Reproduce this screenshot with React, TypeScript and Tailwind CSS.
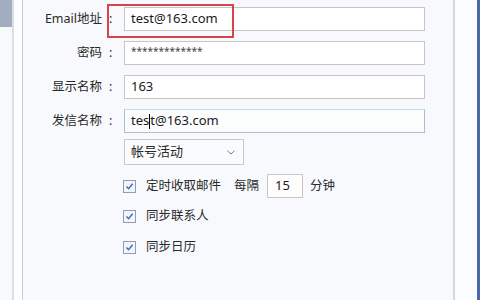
import React from "react";

const font = { fontFamily: '"Noto Sans", "Noto Sans CJK SC", sans-serif' };

function Check() {
  return (
    <span className="w-[13px] h-[13px] border border-[#8e9db3] bg-[#f1f5fb] flex items-center justify-center shrink-0">
      <svg width="9" height="9" viewBox="0 0 9 9">
        <path d="M1.5 4.6 L3.6 6.8 L7.6 1.8" fill="none" stroke="#3c6bb0" strokeWidth="1.4" />
      </svg>
    </span>
  );
}

function Row({ label, children }: { label: string; children: React.ReactNode }) {
  return (
    <div className="flex items-center h-[24px]">
      <div className="w-[79px] text-right text-[12.5px] text-[#2a2a2a] leading-none whitespace-nowrap">{label}</div>
      <div className="w-[22px] text-[12.5px] text-[#2a2a2a] leading-none pl-[7px]">:</div>
      <div className="flex-1">{children}</div>
    </div>
  );
}

export default function App() {
  return (
    <div className="w-[480px] h-[300px] bg-[#f7f9fc] flex overflow-hidden" style={font}>
      <div className="w-[12px] flex flex-col">
        <div className="h-[27px] bg-[#a2aec0]"></div>
      </div>
      <div className="w-[2px] bg-[#dadde2]"></div>
      <div className="w-[8px] bg-[#fcfdfe]"></div>
      <div className="w-[1px] bg-[#c9ccd2]"></div>
      <div className="relative w-[430px] flex flex-col pt-[7px]">
        <div className="flex flex-col gap-[10px] pr-[28px]">
          <Row label="Email地址">
            <div className="h-[24px] border border-[#c6c6c6] bg-white flex items-center px-[6px] text-[13px] text-[#1a1a1a]">test@163.com</div>
          </Row>
          <Row label="密码">
            <div className="h-[24px] border border-[#c6c6c6] bg-white flex items-center px-[6px] pb-[3px] text-[10px] text-[#444]">*************</div>
          </Row>
          <Row label="显示名称">
            <div className="h-[24px] border border-[#c6c6c6] bg-white flex items-center px-[6px] text-[13px] text-[#1a1a1a]">163</div>
          </Row>
          <Row label="发信名称">
            <div className="h-[24px] border border-[#a9bfd4] border-t-[#bfe0ee] bg-[#fbfdfd] flex items-center px-[6px] text-[13px] text-[#1a1a1a]">
              <span>tes</span>
              <span className="w-[1px] h-[15px] bg-black"></span>
              <span>t@163.com</span>
            </div>
          </Row>
        </div>
        <div className="ml-[101px] mt-[6px] w-[120px] h-[26px] border border-[#c6c6c6] bg-[#fafbfc] flex items-center justify-between pl-[6px] pr-[8px]">
          <span className="text-[13px] text-[#2a2a2a]">帐号活动</span>
          <svg width="8" height="5" viewBox="0 0 8 5">
            <path d="M0.5 0.8 L4 4 L7.5 0.8" fill="none" stroke="#777" strokeWidth="1" />
          </svg>
        </div>
        <div className="ml-[100px] mt-[9px] flex flex-col">
          <div className="flex items-center h-[24px]">
            <Check />
            <span className="ml-[10px] text-[12.5px] text-[#2a2a2a]">定时收取邮件</span>
            <span className="ml-[13px] text-[12.5px] text-[#2a2a2a]">每隔</span>
            <div className="ml-[8px] w-[36px] h-[24px] border border-[#c6c6c6] bg-[#fdfdfb] flex items-center px-[7px] text-[13px] text-[#1a1a1a]">15</div>
            <span className="ml-[7px] text-[12.5px] text-[#2a2a2a]">分钟</span>
          </div>
          <div className="flex items-center h-[24px] mt-[6px]">
            <Check />
            <span className="ml-[10px] text-[12.5px] text-[#2a2a2a]">同步联系人</span>
          </div>
          <div className="flex items-center h-[24px] mt-[7px]">
            <Check />
            <span className="ml-[10px] text-[12.5px] text-[#2a2a2a]">同步日历</span>
          </div>
        </div>
        <div className="absolute left-[84px] top-[4px] w-[127px] h-[34px] border-2 border-[#d9434b]"></div>
      </div>
      <div className="w-[2px] bg-[#d6d8dc]"></div>
      <div className="w-[22px] bg-[#fbfcfe]"></div>
      <div className="w-[3px] bg-[#4b68a8]"></div>
    </div>
  );
}
